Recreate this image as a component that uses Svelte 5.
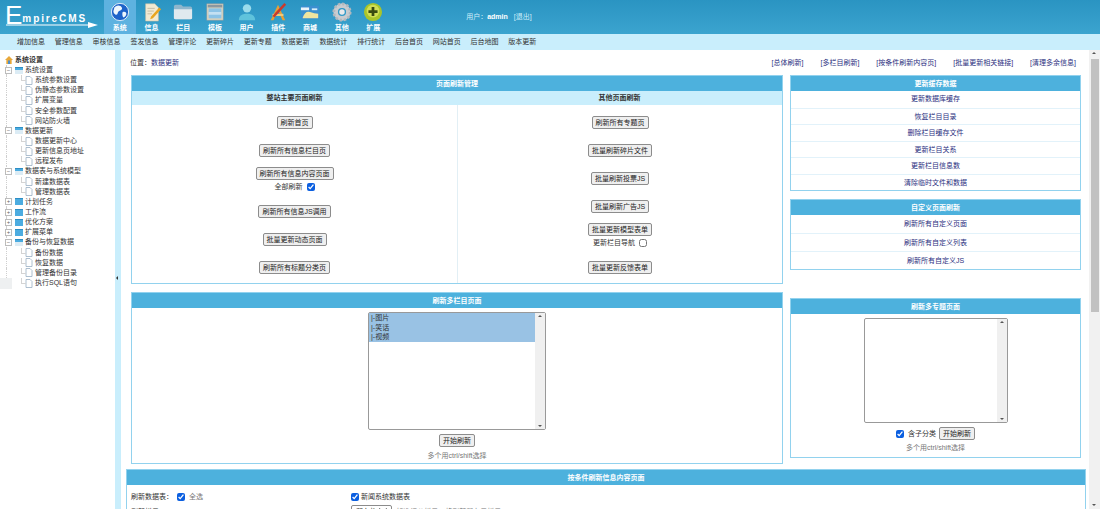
<script>
  const topMenu = ['globe', 'note', 'folder', 'win', 'user', 'tool', 'shop', 'gear', 'plus'];
  const topLabels = ['系统', '信息', '栏目', '模板', '用户', '插件', '商城', '其他', '扩展'];
  const subMenu = ['增加信息', '管理信息', '审核信息', '签发信息', '管理评论', '更新碎片', '更新专题', '数据更新', '数据统计', '排行统计', '后台首页', '网站首页', '后台地图', '版本更新'];

  const tree = [
    { name: '系统设置', open: true, kids: ['系统参数设置', '伪静态参数设置', '扩展变量', '安全参数配置', '网站防火墙'] },
    { name: '数据更新', open: true, kids: ['数据更新中心', '更新信息页地址', '远程发布'] },
    { name: '数据表与系统模型', open: true, kids: ['新建数据表', '管理数据表'] },
    { name: '计划任务', kids: [] },
    { name: '工作流', kids: [] },
    { name: '优化方案', kids: [] },
    { name: '扩展菜单', kids: [] },
    { name: '备份与恢复数据', open: true, kids: ['备份数据', '恢复数据', '管理备份目录', '执行SQL语句'] }
  ];

  const topLinks = ['[总体刷新]', '[多栏目刷新]', '[按条件刷新内容页]', '[批量更新相关链接]', '[清理多余信息]'];

  const leftCol = [
    { btn: '刷新首页' },
    { btn: '刷新所有信息栏目页' },
    { btn: '刷新所有信息内容页面', note: '全部刷新', checked: true },
    { btn: '刷新所有信息JS调用' },
    { btn: '批量更新动态页面' },
    { btn: '刷新所有标题分类页' }
  ];
  const rightCol = [
    { btn: '刷新所有专题页' },
    { btn: '批量刷新碎片文件' },
    { btn: '批量刷新投票JS' },
    { btn: '批量刷新广告JS' },
    { btn: '批量更新模型表单', note: '更新栏目导航', checked: false },
    { btn: '批量更新反馈表单' }
  ];
  const cacheLinks = ['更新数据库缓存', '恢复栏目目录', '删除栏目缓存文件', '更新栏目关系', '更新栏目信息数', '清除临时文件和数据'];
  const customLinks = ['刷新所有自定义页面', '刷新所有自定义列表', '刷新所有自定义JS'];
  const classes = ['|-图片', '|-笑话', '|-视频'];
</script>

{#snippet menuIcon(kind)}
  <svg class="menu-icon" viewBox="0 0 22 22" aria-hidden="true">
    {#if kind === 'globe'}
      <circle cx="11" cy="11" r="9.5" fill="#1d63c9" stroke="#e8f2fb" />
      <path d="M6 5c3-2 6-1 7 1s-1 3-3 4-1 4-3 4-4-3-3-5 0-3 2-4zM14 11c2-1 4 0 4 2s-2 4-3 4-2-4-1-6z" fill="#eef6fc" />
    {:else if kind === 'note'}
      <path d="M4 2h10l4 4v15H4z" fill="#f2ead2" stroke="#c9bf9f" stroke-width=".6" />
      <path d="M6 7h8M6 10h7M6 13h5" stroke="#b7ae95" stroke-width=".8" />
      <path d="M19 6l2 2-9 10-3 1 1-3z" fill="#e8a520" />
    {:else if kind === 'folder'}
      <path d="M1 5q0-2 2-2h6l2 2h8q2 0 2 2v11q0 1-2 1H3q-2 0-2-1z" fill="#8fb6cc" />
      <path d="M1 8h20v10q0 1-2 1H3q-2 0-2-1z" fill="#dfe9ef" />
    {:else if kind === 'win'}
      <rect x="2" y="2" width="18" height="18" fill="#d9d4bd" stroke="#8d9aa3" stroke-width=".6" />
      <rect x="3" y="3" width="16" height="3" fill="#8a97a0" />
      <rect x="4" y="7" width="14" height="11" fill="#8cc3e6" />
      <rect x="4" y="11" width="14" height="3" fill="#c4e0f2" />
    {:else if kind === 'user'}
      <circle cx="11" cy="7" r="4.6" fill="#9bdcec" />
      <path d="M2 20q0-6 7-7h4q7 1 7 7z" fill="#5fc3dc" />
    {:else if kind === 'tool'}
      <path d="M11 3L3 20h3l5-11 5 11h3z" fill="#e6a035" />
      <rect x="5" y="13" width="12" height="2.4" fill="#f1c979" />
      <path d="M18 1l2 2L7 17l-2-2z" fill="#c93a2e" />
    {:else if kind === 'shop'}
      <rect x="1" y="4" width="20" height="15" rx="1.5" fill="#3b8fd0" />
      <rect x="1" y="6" width="9" height="3" fill="#eaf4fa" />
      <path d="M3 17q3-8 8-6t9 2v5H3z" fill="#f0e4a0" />
      <rect x="13" y="7" width="6" height="2" fill="#d6eef8" />
    {:else if kind === 'gear'}
      <circle cx="11" cy="11" r="7" fill="none" stroke="#c8ccd0" stroke-width="5" />
      <circle cx="11" cy="11" r="9" fill="none" stroke="#b3b8bd" stroke-width="3" stroke-dasharray="2.6 2.1" />
      <circle cx="11" cy="11" r="3" fill="#e8eaec" />
    {:else}
      <circle cx="11" cy="11" r="10" fill="#a9c42a" />
      <circle cx="11" cy="10" r="7" fill="#d2df55" />
      <path d="M9.5 5.5h3v3.5H16v3h-3.500v3.500h-3V12H6V9h3.500z" fill="#3a4a10" />
    {/if}
  </svg>
{/snippet}

{#snippet fakeList(items, wide)}
  <div class="fake-select" class:wide role="listbox" aria-multiselectable="true">
    <div class="options">
      {#each items as item}
        <div class="option">{item}</div>
      {/each}
    </div>
    <div class="list-scroll"><span class="up"></span><span class="down"></span></div>
  </div>
{/snippet}

{#snippet buttonColumn(title, rows)}
  <div class="btn-col">
    <div class="sub-head">{title}</div>
    <div class="btn-rows">
      {#each rows as row}
        <div class="btn-row" class:tall={row.note}>
          <button type="button">{row.btn}</button>
          {#if row.note}
            <label class="note">{row.note}<input type="checkbox" checked={row.checked} /></label>
          {/if}
        </div>
      {/each}
    </div>
  </div>
{/snippet}

<div class="page">
  <header class="top">
    <div class="logo">
      <span class="logo-e">E</span><span class="logo-rest">mpireCMS</span>
      <svg class="logo-arrow" viewBox="0 0 92 6" aria-hidden="true"><path d="M0 2.400h82V0l10 3-10 3V3.600H0z" fill="#fff" /></svg>
    </div>
    <nav class="top-menu">
      {#each topMenu as kind, i}
        <div class="top-item" class:active={i === 0}>
          {@render menuIcon(kind)}
          <span>{topLabels[i]}</span>
        </div>
      {/each}
    </nav>
    <div class="user">用户：<b>admin</b><span class="logout">[退出]</span></div>
  </header>

  <div class="sub-menu">
    {#each subMenu as item}
      <span>{item}</span>
    {/each}
  </div>

  <div class="body">
    <aside class="side">
      <div class="tree-root">
        <svg class="root-icon" viewBox="0 0 9 9" aria-hidden="true"><path d="M4.500 0L9 4.500H7.500V9h-6V4.500H0z" fill="#e8a83a" /><rect x="3.400" y="5" width="2.200" height="4" fill="#4b8fcf" /></svg>
        系统设置
      </div>
      {#each tree as group}
        <div class="tree-row group">
          <span class="toggle">{group.open ? '−' : '+'}</span>
          <span class="folder" class:open={group.open}></span>
          {group.name}
        </div>
        {#each group.kids as kid}
          <div class="tree-row kid">
            <svg class="page-icon" viewBox="0 0 8 9" aria-hidden="true"><path d="M1 .5h4l2 2v6H1z" fill="#fff" stroke="#9ab0c4" stroke-width=".8" /></svg>
            {kid}
          </div>
        {/each}
      {/each}
    </aside>

    <div class="handle"><span class="handle-arrow"></span></div>

    <main class="main">
      <div class="crumbs">
        <div>位置：<span class="link">数据更新</span></div>
        <div class="top-links">
          {#each topLinks as link}
            <span class="link">{link}</span>
          {/each}
        </div>
      </div>

      <div class="columns">
        <div class="col-left">
          <section class="panel">
            <h3>页面刷新管理</h3>
            <div class="btn-grid">
              {@render buttonColumn('整站主要页面刷新', leftCol)}
              {@render buttonColumn('其他页面刷新', rightCol)}
            </div>
          </section>

          <section class="panel multi">
            <h3>刷新多栏目页面</h3>
            {@render fakeList(classes, true)}
            <button type="button" class="start">开始刷新</button>
            <p class="hint">多个用ctrl/shift选择</p>
          </section>
        </div>

        <div class="col-right">
          <section class="panel">
            <h3>更新缓存数据</h3>
            {#each cacheLinks as link}
              <div class="link-row link">{link}</div>
            {/each}
          </section>

          <section class="panel custom">
            <h3>自定义页面刷新</h3>
            {#each customLinks as link}
              <div class="link-row link">{link}</div>
            {/each}
          </section>

          <section class="panel multi topic">
            <h3>刷新多专题页面</h3>
            {@render fakeList([], false)}
            <div class="topic-actions">
              <label><input type="checkbox" checked />含子分类</label>
              <button type="button">开始刷新</button>
            </div>
            <p class="hint">多个用ctrl/shift选择</p>
          </section>
        </div>
      </div>

      <section class="panel bottom">
        <h3>按条件刷新信息内容页面</h3>
        <div class="form-row first">
          <div class="form-label">刷新数据表：<label class="all"><input type="checkbox" checked />全选</label></div>
          <label class="form-value"><input type="checkbox" checked />新闻系统数据表</label>
        </div>
        <div class="form-row">
          <div class="form-label">刷新栏目</div>
          <div class="form-value">
            <select><option>所有栏目</option></select>
            <span class="muted">(如选择父栏目，将刷新所有子栏目)</span>
          </div>
        </div>
      </section>
    </main>

    <div class="page-scroll">
      <span class="up"></span>
      <div class="thumb"></div>
      <span class="down"></span>
    </div>
  </div>

  <div class="float-tab"></div>
</div>

<style>
  :global(body) {
    margin: 0;
    background: #fff;
  }

  .page {
    position: relative;
    height: 509px;
    overflow: hidden;
    font: 7px/10px "Liberation Sans", "Noto Sans CJK SC", sans-serif;
    color: #333;
  }

  /* top bar */
  .top {
    display: flex;
    height: 34px;
    background: linear-gradient(#2a94c2, #3ba4cf);
  }

  .logo {
    position: relative;
    display: flex;
    align-items: flex-start;
    width: 104px;
    flex: none;
    padding: 3px 0 0 5px;
    box-sizing: border-box;
    color: #fff;
  }

  .logo-e {
    font-size: 26px;
    line-height: 24px;
  }

  .logo-rest {
    margin-top: 10px;
    font-size: 10px;
    line-height: 11px;
    letter-spacing: 1.900px;
    font-weight: 700;
  }

  .logo-arrow {
    position: absolute;
    left: 6px;
    top: 22px;
    width: 92px;
    height: 6px;
  }

  .top-menu {
    display: flex;
    flex: none;
  }

  .top-item {
    display: flex;
    flex-direction: column;
    align-items: center;
    width: 31.700px;
    padding-top: 2px;
    box-sizing: border-box;
    color: #fff;
    font-weight: 700;
  }

  .top-item.active {
    background: #5eb2e0;
  }

  .menu-icon {
    width: 20px;
    height: 20px;
    margin-bottom: 1px;
  }

  .user {
    margin: 12px 0 0 77px;
    color: #cfeefa;
  }

  .user b {
    color: #fff;
  }

  .logout {
    margin-left: 6px;
  }

  .sub-menu {
    display: flex;
    gap: 9.800px;
    height: 16px;
    padding-left: 17px;
    align-items: center;
    background: #c9eefc;
  }

  .body {
    display: flex;
    height: 459px;
  }

  /* left tree */
  .side {
    width: 115px;
    flex: none;
    padding: 5px 0 0 5px;
    box-sizing: border-box;
  }

  .tree-root {
    display: flex;
    align-items: center;
    gap: 2px;
    height: 10px;
    font-weight: 700;
  }

  .root-icon {
    width: 8px;
    height: 8px;
  }

  .tree-row {
    position: relative;
    display: flex;
    align-items: center;
    height: 10.150px;
    white-space: nowrap;
  }

  .tree-row::before {
    content: "";
    position: absolute;
    left: 1px;
    top: 0;
    bottom: 0;
    border-left: 1px dotted #cfcfcf;
  }

  .toggle {
    position: relative;
    z-index: 1;
    width: 5px;
    height: 5px;
    margin-right: 3px;
    border: 1px solid #bcbcbc;
    background: #fff;
    font-size: 6px;
    line-height: 5px;
    text-align: center;
    color: #666;
  }

  .folder {
    width: 8px;
    height: 7px;
    margin-right: 2px;
    background: #4cace0;
    border-top: 1px solid #2f8ec4;
    box-sizing: border-box;
  }

  .folder.open {
    background: linear-gradient(#4cace0 35%, #dcecf5 35%);
  }

  .kid {
    padding-left: 20px;
  }

  .kid::after {
    content: "";
    position: absolute;
    left: 16px;
    top: 0;
    width: 4px;
    height: 5px;
    border-left: 1px solid #d4d4d4;
    border-bottom: 1px solid #d4d4d4;
  }

  .page-icon {
    width: 8px;
    height: 9px;
    margin-right: 2px;
  }

  .handle {
    position: relative;
    width: 6px;
    flex: none;
    background: #c9eefc;
  }

  .handle-arrow {
    position: absolute;
    left: 1px;
    top: 226px;
    border: 2px solid transparent;
    border-right-color: #333;
    border-left-width: 0;
  }

  .float-tab {
    position: absolute;
    left: 0;
    top: 278px;
    width: 12px;
    height: 11px;
    background: #eef0f1;
  }

  /* main area */
  .main {
    flex: 1;
    min-width: 0;
    padding-left: 5px;
  }

  .crumbs {
    display: flex;
    justify-content: space-between;
    align-items: center;
    height: 25px;
    padding: 0 13px 0 4px;
  }

  .top-links {
    display: flex;
    gap: 17px;
  }

  .link {
    color: #2b2f80;
  }

  .columns {
    display: flex;
    gap: 7px;
    padding-left: 5px;
    width: 950px;
  }

  .col-left {
    display: flex;
    flex-direction: column;
    gap: 8px;
    width: 652px;
    flex: none;
  }

  .col-right {
    display: flex;
    flex-direction: column;
    width: 291px;
    flex: none;
  }

  .panel {
    border: 1px solid #92d2ee;
    background: #fff;
  }

  .panel h3 {
    margin: 0;
    height: 15px;
    background: #4db1dd;
    color: #fff;
    font-size: 7px;
    line-height: 15px;
    text-align: center;
  }

  .btn-grid {
    display: grid;
    grid-template-columns: 1fr 1fr;
  }

  .btn-col + .btn-col .btn-rows {
    border-left: 1px solid #e2eff5;
  }

  .sub-head {
    height: 14px;
    background: #c9eefc;
    font-weight: 700;
    line-height: 14px;
    text-align: center;
  }

  .btn-rows {
    padding: 3px 0 2px;
  }

  .btn-row {
    display: flex;
    flex-direction: column;
    align-items: center;
    justify-content: center;
    height: 28px;
  }

  .btn-row.tall {
    height: 33px;
    padding-bottom: 2px;
    box-sizing: border-box;
  }

  button {
    height: 13px;
    padding: 0 3px;
    border: 1px solid #8c8c8c;
    border-radius: 2px;
    background: #efefef;
    font: inherit;
    line-height: 11px;
    color: #222;
    white-space: nowrap;
  }

  .note {
    display: flex;
    align-items: center;
    gap: 4px;
    margin-top: 2px;
  }

  input[type="checkbox"] {
    width: 8px;
    height: 8px;
    margin: 0;
    accent-color: #0b5fe0;
  }

  .multi {
    display: flex;
    flex-direction: column;
    align-items: center;
    height: 172px;
    box-sizing: border-box;
  }

  .multi h3 {
    align-self: stretch;
  }

  .fake-select {
    display: flex;
    width: 178px;
    height: 118px;
    margin-top: 4px;
    border: 1px solid #999;
    border-radius: 2px;
    box-sizing: border-box;
  }

  .options {
    flex: 1;
  }

  .option {
    height: 9.700px;
    padding-left: 2px;
    background: #99c2e4;
    line-height: 9.700px;
  }

  .list-scroll {
    position: relative;
    width: 10px;
    background: #f0f0f0;
  }

  .list-scroll .up,
  .list-scroll .down {
    position: absolute;
    left: 3px;
    border: 2px solid transparent;
    border-left-width: 2px;
  }

  .list-scroll .up {
    top: 2px;
    border-bottom-color: #555;
    border-top-width: 0;
  }

  .list-scroll .down {
    bottom: 2px;
    border-top-color: #555;
    border-bottom-width: 0;
  }

  .start {
    margin-top: 4px;
  }

  .hint {
    margin: 4px 0 0;
    color: #777;
  }

  .link-row {
    height: 16.500px;
    line-height: 16.500px;
    text-align: center;
    border-top: 1px solid #e2f2fa;
    box-sizing: border-box;
  }

  .link-row:first-of-type {
    border-top: 0;
  }

  .custom {
    margin-top: 8px;
  }

  .custom .link-row {
    height: 18px;
    line-height: 18px;
  }

  .topic {
    height: 160px;
    margin-top: 28px;
  }

  .fake-select:not(.wide) {
    width: 144px;
    height: 105px;
    margin-top: 4px;
  }

  .topic-actions {
    display: flex;
    align-items: center;
    gap: 3px;
    margin-top: 4px;
  }

  .topic-actions label {
    display: flex;
    align-items: center;
    gap: 4px;
  }

  .topic .hint {
    margin-top: 3px;
  }

  .bottom {
    width: 960px;
    margin-top: 5px;
    box-sizing: border-box;
  }

  .form-row {
    display: flex;
    align-items: center;
    height: 13px;
    padding-left: 4px;
  }

  .form-row.first {
    height: 20px;
    padding-top: 3px;
    box-sizing: border-box;
  }

  .form-label {
    display: flex;
    align-items: center;
    width: 220px;
    flex: none;
  }

  .all {
    display: flex;
    align-items: center;
    gap: 4px;
    margin-left: 4px;
    color: #777;
  }

  .form-value {
    display: flex;
    align-items: center;
    gap: 2px;
  }

  select {
    width: 41px;
    height: 13px;
    padding: 0;
    font: inherit;
    border: 1px solid #8c8c8c;
    border-radius: 2px;
    background: #fff;
  }

  .muted {
    color: #777;
  }

  /* page scrollbar */
  .page-scroll {
    position: relative;
    width: 11px;
    flex: none;
    background: #f1f1f1;
  }

  .thumb {
    position: absolute;
    left: 2px;
    right: 1px;
    top: 9px;
    height: 253px;
    background: #c1c1c1;
  }

  .page-scroll .up,
  .page-scroll .down {
    position: absolute;
    left: 3px;
    border: 2.500px solid transparent;
  }

  .page-scroll .up {
    top: 2px;
    border-bottom-color: #555;
    border-top-width: 0;
  }

  .page-scroll .down {
    bottom: 3px;
    border-top-color: #555;
    border-bottom-width: 0;
  }
</style>
